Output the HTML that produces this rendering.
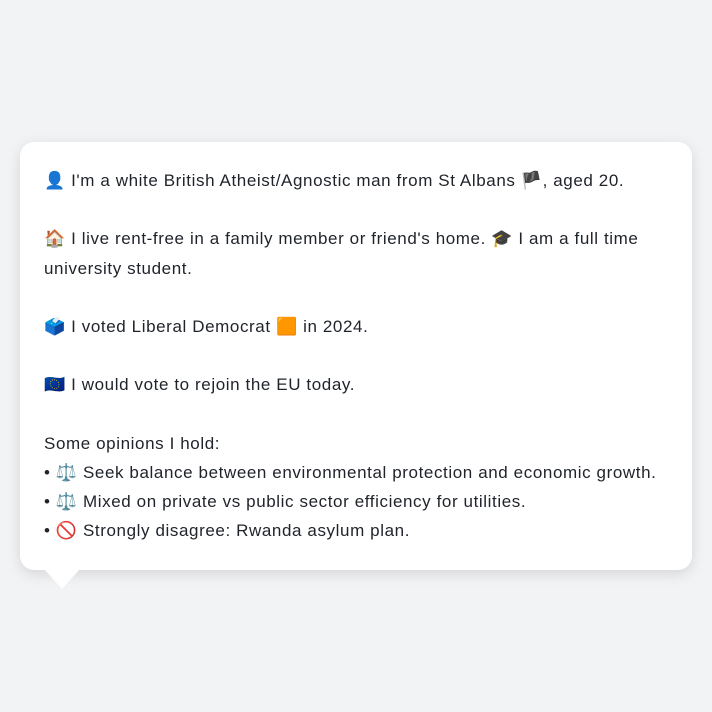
<!DOCTYPE html>
<html><head><meta charset="utf-8"><style>
html,body{margin:0;padding:0;background:#f2f3f5;width:712px;height:712px;overflow:hidden}
.card{position:absolute;left:20px;top:142px;width:672px;height:428px;background:#fff;border-radius:14px;box-shadow:0 4px 14px rgba(0,0,0,0.12)}
.tail{position:absolute;left:44px;top:569px;width:0;height:0;border-left:18px solid transparent;border-right:18px solid transparent;border-top:20px solid #fff}
.txt{position:absolute;left:44px;top:166px;width:636px;font-family:"Liberation Sans","DejaVu Sans",sans-serif;font-size:17px;letter-spacing:0.6px;line-height:29.2px;color:#1f232a}
p{margin:0}
</style></head><body>
<div class="card"></div><div class="tail"></div>
<div class="txt">
<p>👤 I'm a white British Atheist/Agnostic man from St Albans 🏴, aged 20.</p>
<p>&nbsp;</p>
<p>🏠 I live rent-free in a family member or friend's home. 🎓 I am a full time<br>university student.</p>
<p>&nbsp;</p>
<p>🗳️ I voted Liberal Democrat 🟧 in 2024.</p>
<p>&nbsp;</p>
<p>🇪🇺 I would vote to rejoin the EU today.</p>
<p>&nbsp;</p>
<p>Some opinions I hold:</p>
<p style="white-space:nowrap">• ⚖️ Seek balance between environmental protection and economic growth.</p>
<p>• ⚖️ Mixed on private vs public sector efficiency for utilities.</p>
<p>• 🚫 Strongly disagree: Rwanda asylum plan.</p>
</div>
</body></html>
